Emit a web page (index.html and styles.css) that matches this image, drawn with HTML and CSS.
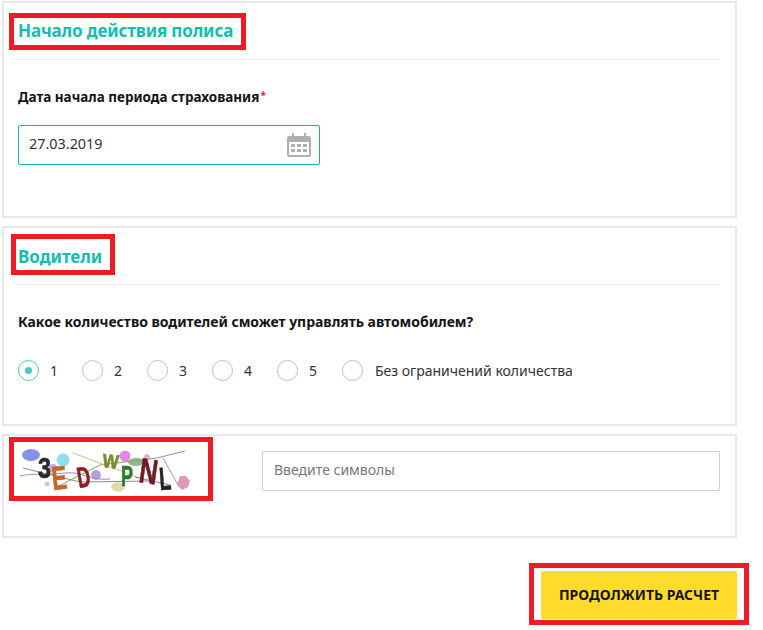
FILE: index.html
```html
<!doctype html>
<html lang="ru">
<head>
    <meta charset="UTF-8">
    <title>Расчет полиса</title>
    <link rel="stylesheet" href="styles.css">
</head>
<body>

<div class="wrapper">
    <section class="card card-date">
        <span class="mark mark-date"></span>
        <h2 class="card-title">Начало действия полиса</h2>
        <div class="field-label field-label-date">Дата начала периода страхования<span class="req">*</span></div>
        <div class="date-input">
            <span>27.03.2019</span>
            <svg class="calendar" width="24" height="24" viewBox="0 0 24 24">
                <path fill="#b0b0b0" d="M2 3h3V0h2v3h10V0h2v3h3a2 2 0 0 1 2 2v17a2 2 0 0 1-2 2H2a2 2 0 0 1-2-2V5a2 2 0 0 1 2-2z"/>
                <path fill="#fff" d="M2 9h20v13H2z"/>
                <path fill="#b0b0b0" d="M4 11h4v3H4zM10 11h4v3h-4zM16 11h4v3h-4zM4 16h4v3H4zM10 16h4v3h-4zM16 16h4v3h-4z"/>
            </svg>
        </div>
    </section>

    <section class="card card-drivers">
        <span class="mark mark-drivers"></span>
        <h2 class="card-title">Водители</h2>
        <div class="field-label">Какое количество водителей сможет управлять автомобилем?</div>
        <ul class="radios">
            <li><span class="radio checked"></span>1</li>
            <li><span class="radio"></span>2</li>
            <li><span class="radio"></span>3</li>
            <li><span class="radio"></span>4</li>
            <li><span class="radio"></span>5</li>
            <li><span class="radio"></span>Без ограничений количества</li>
        </ul>
    </section>

    <section class="card card-captcha">
        <span class="mark mark-captcha"></span>
        <svg class="captcha" width="172" height="41" viewBox="0 0 172 41">
            <ellipse cx="11" cy="4" rx="9" ry="6" fill="#8592e6"/>
            <circle cx="43" cy="9" r="6.5" fill="#92dcf2"/>
            <circle cx="33" cy="17" r="4" fill="#c3a6dc"/>
            <circle cx="27" cy="33" r="2.5" fill="#dcc0e4"/>
            <circle cx="76" cy="24" r="5" fill="#b9a0d8"/>
            <circle cx="105" cy="5" r="5.5" fill="#e088e4"/>
            <ellipse cx="116" cy="11" rx="8" ry="4" fill="#8fb894"/>
            <circle cx="127" cy="6" r="3" fill="#e8b0d0"/>
            <ellipse cx="98" cy="36" rx="7" ry="4.5" fill="#dcdca8"/>
            <path d="M160 25h6l4 5-2 6-6 3-5-5z" fill="#e498b8"/>
            <path d="M0 25 C 12 22 28 24 45 22 S 70 30 90 28" fill="none" stroke="#9a8ac8" stroke-width="1"/>
            <path d="M3 17 L60 31 L130 30" fill="none" stroke="#8c8c90" stroke-width="1"/>
            <path d="M37 36 L80 14 L137 7 L165 0" fill="none" stroke="#8f9a70" stroke-width="1"/>
            <path d="M53 2 L130 31" fill="none" stroke="#d8c080" stroke-width="1"/>
            <path d="M143 7 L158 34" fill="none" stroke="#a890c8" stroke-width="1"/>
            <path d="M115 26 L150 34" fill="none" stroke="#7d7dc0" stroke-width="1"/>
            <text class="cl" transform="translate(18 27) scale(.78 1)" fill="#2a2a2a" stroke="#2a2a2a" font-size="30">3</text>
            <text class="cl" transform="translate(33 39) rotate(-6) scale(.68 1)" fill="#c8642c" stroke="#c8642c" font-size="33">E</text>
            <text class="cl" transform="translate(59 37) rotate(-10) scale(.62 1)" fill="#8c2020" stroke="#8c2020" font-size="29">D</text>
            <text class="cl" transform="translate(82 16) rotate(6) scale(.9 1)" fill="#7a8c30" stroke="#7a8c30" font-size="19">W</text>
            <text class="cl" transform="translate(101 35) scale(.6 1)" fill="#2c7a2c" stroke="#2c7a2c" font-size="30">P</text>
            <text class="cl" transform="translate(118 31) rotate(8) scale(.72 1)" fill="#701c24" stroke="#701c24" font-size="35">N</text>
            <text class="cl" transform="translate(140 39) rotate(-4) scale(.6 1)" fill="#242424" stroke="#242424" font-size="32">L</text>
        </svg>
        <div class="captcha-input">Введите символы</div>
    </section>

    <div class="actions">
        <span class="mark mark-submit"></span>
        <button class="submit" type="button">ПРОДОЛЖИТЬ РАСЧЕТ</button>
    </div>
</div>

</body>
</html>
```

FILE: styles.css
```css
* {
    padding: 0;
    margin: 0;
    list-style: none;
    box-sizing: border-box;
}

body {
    background-color: #ffffff;
    color: #141414;
    font-family: "Noto Sans", "Open Sans", sans-serif;
}

.wrapper {
    width: 763px;
    height: 630px;
    padding: 1px 26px 0 2px;
    overflow: hidden;
}

.card {
    position: relative;
    border: 2px solid #e9e9e9;
    padding: 0 15px 0 14px;
    margin-bottom: 8px;
}

.card-date {
    height: 217px;
}

.card-drivers {
    height: 200px;
}

.card-captcha {
    height: 104px;
    display: flex;
    align-items: flex-start;
    margin-bottom: 0;
}

.card-title {
    height: 57px;
    padding-top: 15px;
    border-bottom: 1px solid #ececec;
    color: #12bdb1;
    font-size: 17px;
    letter-spacing: -0.15px;
    line-height: 26px;
    font-weight: 700;
}

.card-drivers .card-title {
    padding-top: 16px;
    letter-spacing: 0;
}

.field-label {
    margin-top: 27px;
    font-size: 14px;
    letter-spacing: -0.04px;
    line-height: 20px;
    font-weight: 700;
}

.field-label-date {
    font-size: 13.5px;
    letter-spacing: 0;
}

.req {
    color: #ed1c24;
    font-size: 10px;
    line-height: 0;
    margin-left: 1px;
    vertical-align: 3px;
}

.date-input {
    width: 302px;
    height: 40px;
    margin-top: 18px;
    padding: 0 8px 3px 10px;
    border: 1px solid #10b5a8;
    border-radius: 2px;
    display: flex;
    align-items: center;
    justify-content: space-between;
    font-size: 14.4px;
    color: #333333;
}

.calendar {
    margin-top: 3px;
}

.radios {
    display: flex;
    margin-top: 28px;
    font-size: 14px;
    color: #333333;
}

.radios li {
    width: 65px;
    display: flex;
    align-items: center;
    gap: 11px;
}

.radios li:first-child {
    width: 64px;
}

.radios li:last-child {
    width: auto;
    gap: 12px;
}

.radio {
    width: 21px;
    height: 21px;
    border: 1px solid #aec6cf;
    border-radius: 50%;
    display: flex;
    align-items: center;
    justify-content: center;
}

.radio.checked {
    border-color: #4cc9c0;
}

.radio.checked::after {
    content: "";
    width: 7px;
    height: 7px;
    border-radius: 50%;
    background-color: #4cc9c0;
}

.captcha {
    display: block;
    margin: 15px 0 0 2px;
    flex: none;
    overflow: visible;
    filter: blur(0.5px);
}

.cl {
    font-family: "Liberation Sans", sans-serif;
    font-weight: 700;
    stroke-width: 0.7px;
}

.captcha-input {
    width: 458px;
    height: 40px;
    margin: 15px 0 0 70px;
    padding-left: 11px;
    border: 1px solid #d0d0d0;
    border-radius: 2px;
    font-size: 14px;
    line-height: 36px;
    color: #777777;
}

.actions {
    position: relative;
    display: flex;
    justify-content: flex-end;
    margin-top: 33px;
}

.submit {
    width: 196px;
    height: 48px;
    padding-bottom: 2px;
    border: 0;
    border-radius: 2px;
    background-color: #ffdc2b;
    color: #141414;
    font-family: inherit;
    font-size: 14px;
    font-weight: 700;
}

/* red annotation frames over the form */
.mark {
    position: absolute;
    border: 5px solid #ed1c24;
    background-color: transparent;
    pointer-events: none;
}

.mark-date {
    left: 5px;
    top: 10px;
    width: 237px;
    height: 37px;
}

.mark-drivers {
    left: 7px;
    top: 6px;
    width: 104px;
    height: 41px;
}

.mark-captcha {
    left: 5px;
    top: 1px;
    width: 204px;
    height: 64px;
}

.mark-submit {
    right: -12px;
    top: -8px;
    width: 220px;
    height: 62px;
}
```
